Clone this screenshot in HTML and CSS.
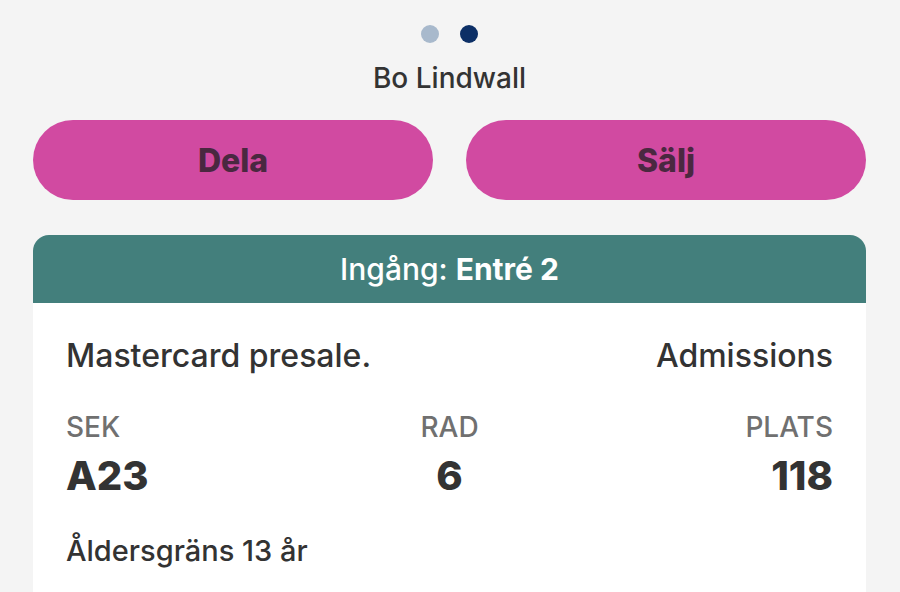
FILE: index.html
```html
<!DOCTYPE html>
<html lang="sv">
<head>
<meta charset="utf-8">
<title>Biljett</title>
<link rel="stylesheet" href="styles.css">
</head>
<body>
<div class="page">
  <div class="dots">
    <span class="dot dot-inactive"></span>
    <span class="dot dot-active"></span>
  </div>
  <div class="owner">Bo Lindwall</div>
  <div class="actions">
    <button class="btn">Dela</button>
    <button class="btn">Sälj</button>
  </div>
  <div class="card">
    <div class="card-head"><span>Ingång: <strong>Entré 2</strong></span></div>
    <div class="card-body">
      <div class="row-top">
        <span>Mastercard presale.</span>
        <span>Admissions</span>
      </div>
      <div class="seats">
        <div class="seat seat-left">
          <div class="label">SEK</div>
          <div class="value">A23</div>
        </div>
        <div class="seat seat-mid">
          <div class="label">RAD</div>
          <div class="value">6</div>
        </div>
        <div class="seat seat-right">
          <div class="label">PLATS</div>
          <div class="value">118</div>
        </div>
      </div>
      <div class="age">Åldersgräns 13 år</div>
    </div>
  </div>
</div>
</body>
</html>
```
FILE: styles.css
```css
* { box-sizing: border-box; }
html, body {
  margin: 0;
  padding: 0;
  background: #f4f4f4;
  font-family: Inter, "Noto Sans", sans-serif;
  color: #333333;
}
.page {
  width: 900px;
  height: 592px;
  overflow: hidden;
  padding: 25px 34px 0 33px;
}
.dots {
  display: flex;
  justify-content: center;
  gap: 21px;
}
.dot {
  width: 18px;
  height: 18px;
  border-radius: 50%;
  display: block;
}
.dot-inactive { background: #a8b9cc; }
.dot-active { background: #0c2f66; }
.owner {
  text-align: center;
  font-size: 28px;
  font-weight: 500;
  margin-top: 18px;
  line-height: 34px;
}
.actions {
  display: flex;
  gap: 33px;
  margin-top: 25px;
}
.btn {
  flex: 1;
  height: 80px;
  border: none;
  border-radius: 40px;
  background: #d14aa1;
  color: #4a2840;
  font-family: Inter, "Noto Sans", sans-serif;
  font-weight: 800;
  font-size: 32px;
  padding: 0;
}
.card {
  margin-top: 35px;
  border-radius: 16px 16px 0 0;
  overflow: hidden;
  background: #ffffff;
}
.card-head {
  height: 68px;
  background: #437f7c;
  color: #ffffff;
  font-size: 30px;
  font-weight: 500;
  display: flex;
  align-items: center;
  justify-content: center;
}
.card-head strong { font-weight: 700; }
.card-body {
  padding: 34px 33px 40px 33px;
}
.row-top {
  display: flex;
  justify-content: space-between;
  font-size: 32px;
  font-weight: 500;
  line-height: 38px;
}
.seats {
  display: grid;
  grid-template-columns: 1fr 1fr 1fr;
  margin-top: 35px;
}
.seat-mid { text-align: center; }
.seat-right { text-align: right; }
.label {
  color: #707070;
  font-size: 28px;
  font-weight: 500;
  line-height: 34px;
}
.value {
  font-weight: 800;
  font-size: 40px;
  line-height: 50px;
  margin-top: 7px;
}
.age {
  font-size: 29px;
  font-weight: 500;
  margin-top: 33px;
  line-height: 34px;
}
```
